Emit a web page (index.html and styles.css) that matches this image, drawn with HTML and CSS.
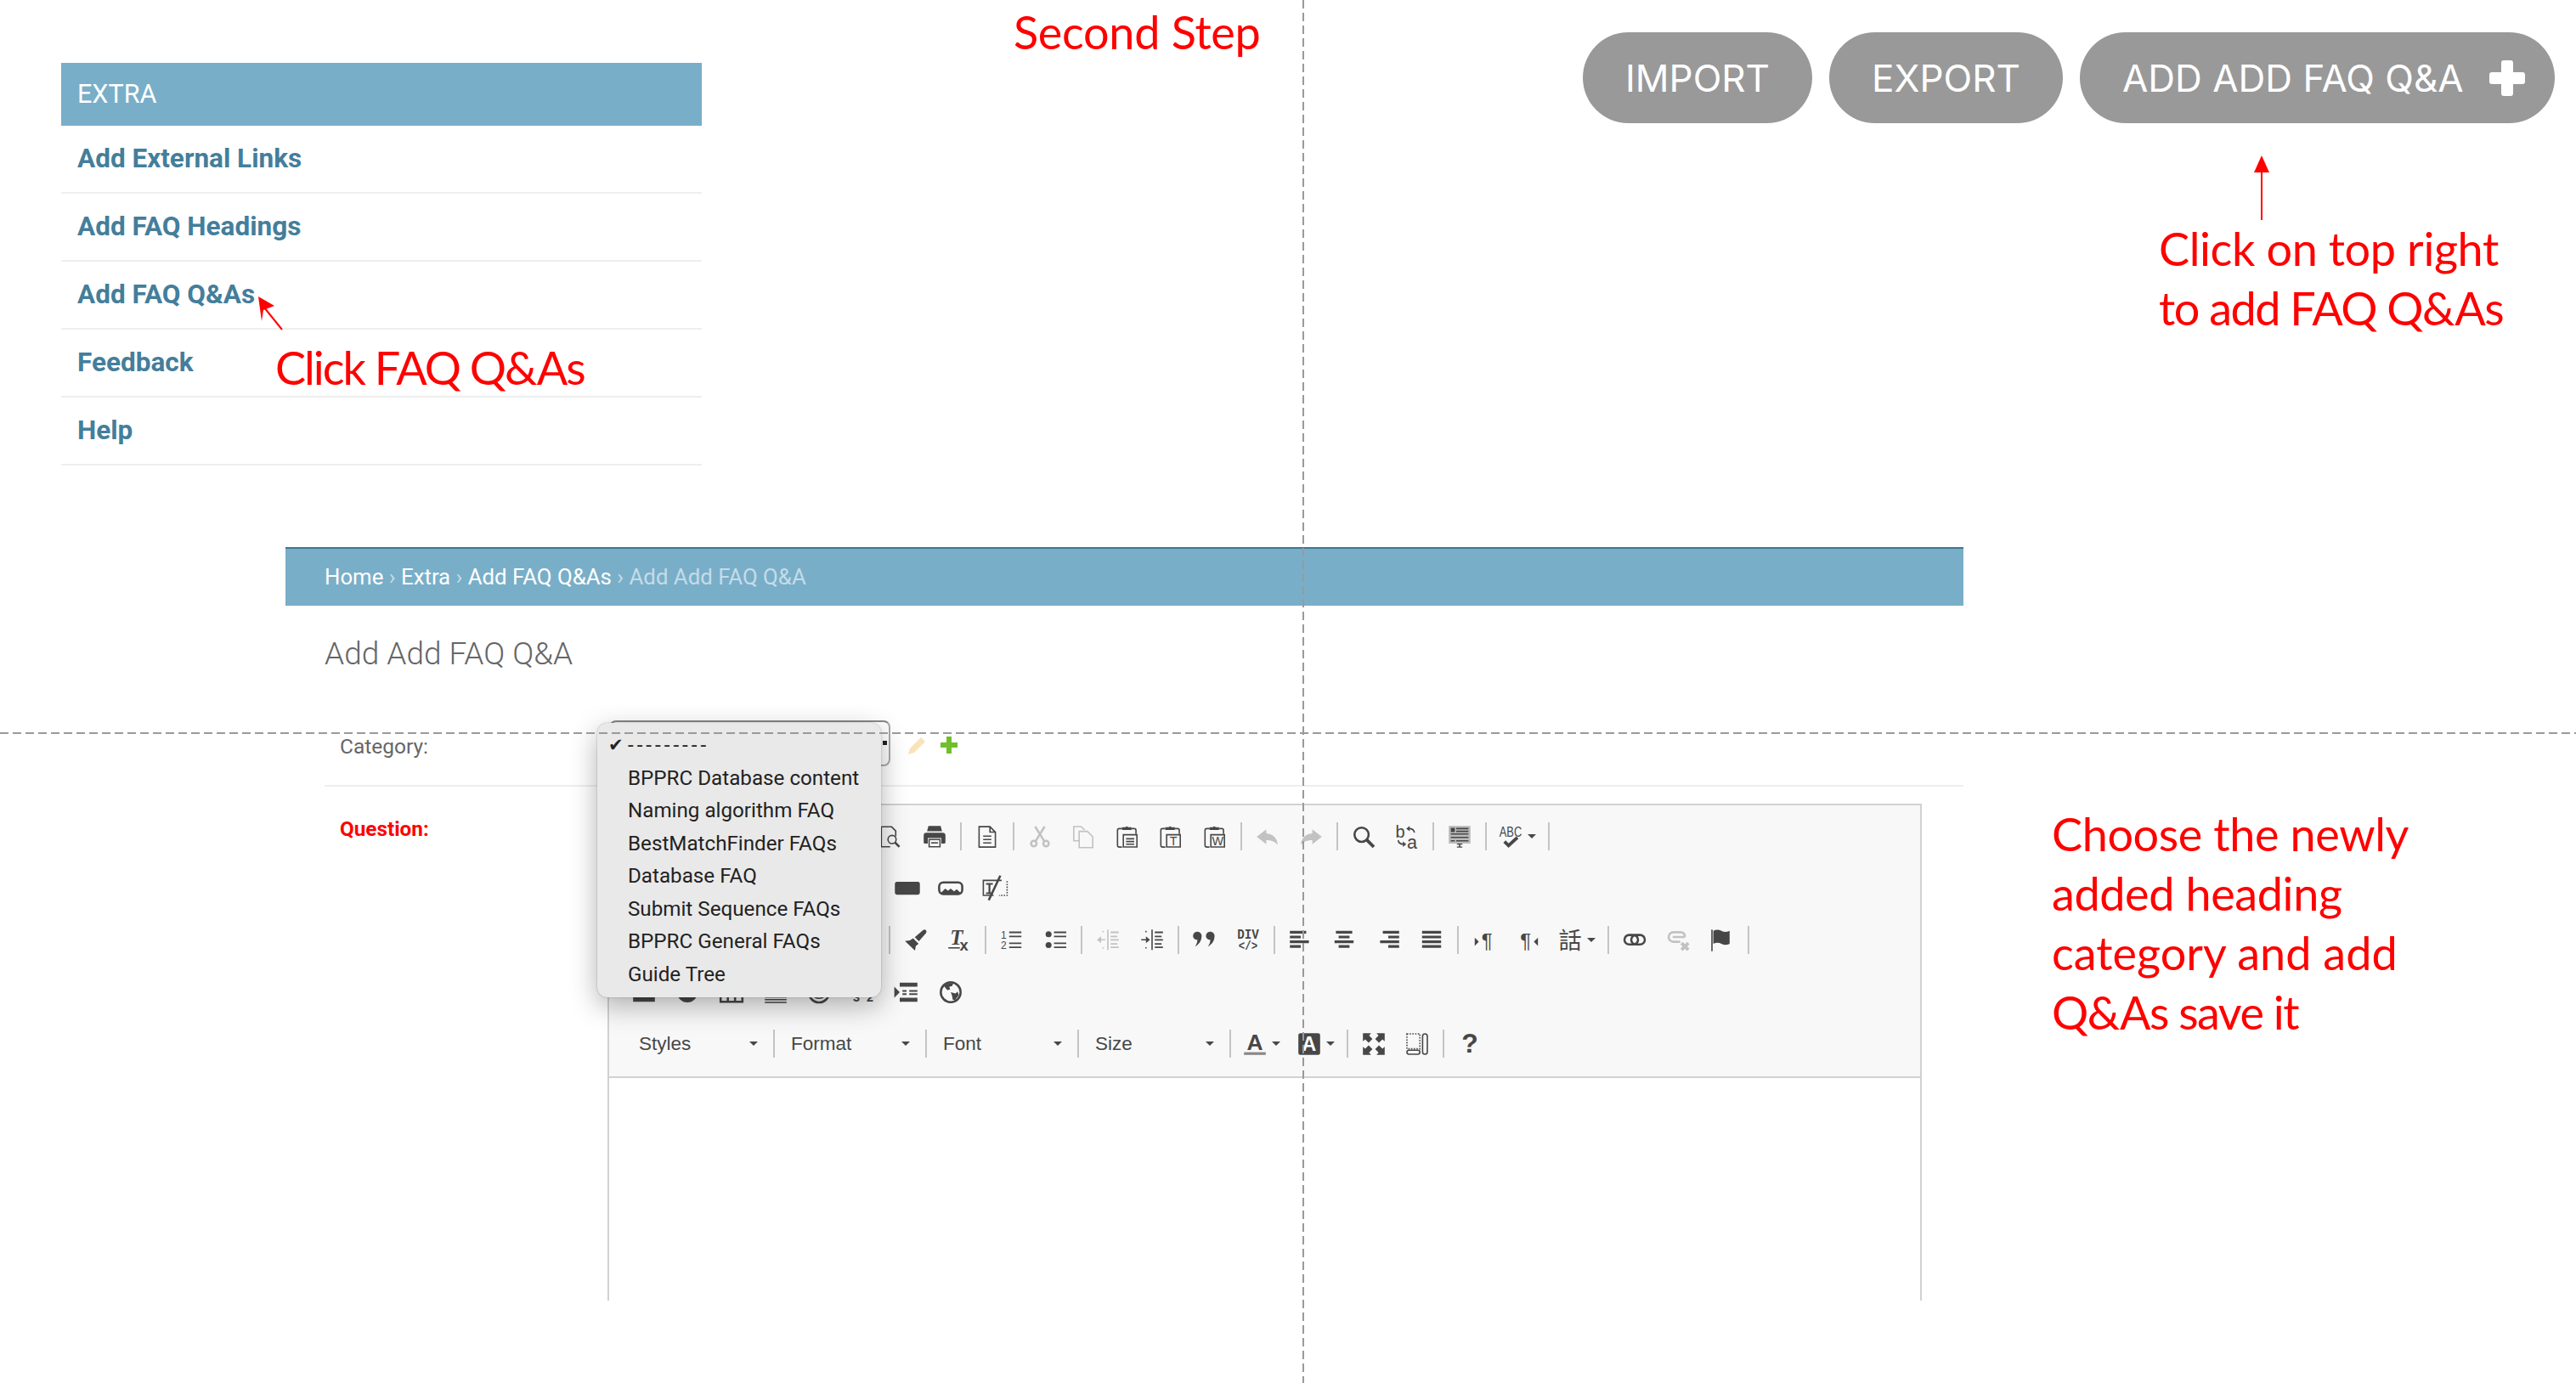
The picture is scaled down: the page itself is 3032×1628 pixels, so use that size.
FILE: index.html
```html
<!DOCTYPE html>
<html lang="en">
<head>
    <meta charset="UTF-8">
    <meta name="viewport" content="width=device-width, initial-scale=1.0">
    <title>Add FAQ Q&amp;As - Second Step</title>
    <link rel="stylesheet" href="styles.css">
</head>
<body>
    <svg class="sprite" aria-hidden="true">
        <defs>
            <symbol id="i-preview" viewBox="-2 -2 20 20"><path class="ln" d="M.7.7h7.6l3 3v4M.7.7v14.6h6.500"/><circle class="ln" cx="8.600" cy="10" r="3"/><path class="ln w2" d="M10.800 12.200l3.200 3.200"/></symbol>
            <symbol id="i-print" viewBox="-2 -2 20 20"><path d="M3.500 0h9l1 4h-11z"/><path d="M2 5h12q2 0 2 2v5q0 1-1 1h-2V9H3v4H1q-1 0-1-1V7q0-2 2-2z"/><path class="ln" d="M4 10h8v5.300H4z"/><path d="M5.500 12h5v1h-5z"/></symbol>
            <symbol id="i-doc" viewBox="-2 -2 20 20"><path class="ln" d="M2 .6h8l4 4v11H2zM10 .6v4h4"/><path d="M5 7h6v1H5zM5 9.500h6v1H5zM5 12h6v1H5z"/></symbol>
            <symbol id="i-cut" viewBox="-2 -2 20 20"><circle class="ln w2" cx="3.500" cy="13" r="2"/><circle class="ln w2" cx="12.500" cy="13" r="2"/><path class="ln w2" d="M4.800 11.200L11.500.5M11.200 11.200L4.500.5"/></symbol>
            <symbol id="i-copy" viewBox="-2 -2 20 20"><path class="ln" d="M5 11H1V.5h5.500l2.500 2.500"/><path class="ln" d="M5 4h6l4 4v8H5z"/></symbol>
            <symbol id="i-paste" viewBox="-2 -2 20 20"><path class="ln" d="M4 2H2q-1.300 0-1.300 1.300v11q0 1.300 1.300 1.300h2M11 2h2q1.300 0 1.300 1.300V6"/><path d="M4 1h2.500q1-1.200 2 0H11v2H4z"/><path class="ln" d="M5 6.500h10v9H5z"/><path d="M7 9h6v1H7zM7 11h6v1H7zM7 13h6v1H7z"/></symbol>
            <symbol id="i-pastetext" viewBox="-2 -2 20 20"><path class="ln" d="M4 2H2q-1.300 0-1.300 1.300v11q0 1.300 1.300 1.300h2M11 2h2q1.300 0 1.300 1.300V6"/><path d="M4 1h2.500q1-1.200 2 0H11v2H4z"/><path class="ln" d="M5 6.500h10v9H5z"/><text class="glyph" x="10" y="14" font-size="9" text-anchor="middle">T</text></symbol>
            <symbol id="i-pasteword" viewBox="-2 -2 20 20"><path class="ln" d="M4 2H2q-1.300 0-1.300 1.300v11q0 1.300 1.300 1.300h2M11 2h2q1.300 0 1.300 1.300V6"/><path d="M4 1h2.500q1-1.200 2 0H11v2H4z"/><path class="ln" d="M5 6.500h10v9H5z"/><text class="glyph" x="10" y="14" font-size="9" text-anchor="middle">W</text></symbol>
            <symbol id="i-undo" viewBox="-2 -2 20 20"><path d="M7 2.500L0 8l7 5.500V10.500c3.500 0 6.500 1 8.500 3.500C15 9 12 6 7 5.500z"/></symbol>
            <symbol id="i-redo" viewBox="-2 -2 20 20"><path d="M9 2.500L16 8l-7 5.500V10.500c-3.500 0-6.500 1-8.500 3.500C1 9 4 6 9 5.500z"/></symbol>
            <symbol id="i-find" viewBox="-2 -2 20 20"><circle class="ln w2" cx="6.500" cy="6.500" r="5.200"/><path class="ln w3" d="M10.300 10.300l5.200 5.200"/></symbol>
            <symbol id="i-replace" viewBox="-2 -2 20 20"><text class="glyph" x="-.5" y="8.500" font-size="12.500">b</text><text class="glyph" x="8" y="16.500" font-size="13.500">a</text><path class="ln" d="M13.500 5Q13 2 9.500 2M1.500 10.500q.5 3 4 3"/><path d="M10 0v4L7.500 2zM5 11.500v4l2.500-2z"/></symbol>
            <symbol id="i-blocks" viewBox="-2 -2 20 20"><path fill="#bbb" d="M0 0h16v13H0z"/><path d="M1.500 1.500h3v3h-3zM5.500 1.500h9v1h-9zM5.500 3.500h9v1h-9zM1.500 5.500h13v1h-13zM1.500 8h13v1h-13zM1.500 10.500h3v1h-3zM5.500 10.500h9v1h-9z"/><path d="M6 13h4v.8H8.500v1.400H10v.8H6v-.8h1.500v-1.400H6z"/></symbol>
            <symbol id="i-spell" viewBox="-2 -2 20 20"><text class="glyph" x="8" y="8" font-size="10.500" text-anchor="middle" textLength="16.500" lengthAdjust="spacingAndGlyphs">ABC</text><path class="ln w3" d="M3.500 11.500l3 3 6.500-6"/></symbol>
            <symbol id="i-button" viewBox="-2 -2 20 20"><rect x="-1.200" y="3" width="18.400" height="9.500" rx="1.500"/></symbol>
            <symbol id="i-imgbutton" viewBox="-2 -2 20 20"><rect class="ln w2" x="-.500" y="3.500" width="17" height="8.500" rx="3"/><path d="M1 11l3-3 2 1.500L8 8l2.500 2L12.500 8.500 15 11v.500H1z"/></symbol>
            <symbol id="i-field" viewBox="-2 -2 20 20"><path class="ln" d="M7 13H-.5V2H13"/><path d="M1.500 4h5v1.200H4.700v5.600h1.800V12h-5v-1.200h1.800V5.200H1.500z"/><path class="ln w2" d="M12-1.500L3.500 16.500"/><path class="ln dots" d="M17 2.500V13H11"/></symbol>
            <symbol id="i-brush" viewBox="-2 -2 20 20"><path d="M6 6.500l4 4-2 1.500-.7 3.500L0 8.500l3.500-.5z"/><path d="M7.200 5.700l6-5.200q1.300-1 2.200 0t0 2.200l-5.200 6z"/></symbol>
            <symbol id="i-clear" viewBox="-2 -2 20 20"><text x="6" y="11" font-size="15.500" font-weight="700" font-style="italic" font-family="Liberation Serif" text-anchor="middle">T</text><path d="M0 13h8.500v1H0z"/><text class="glyph bold" x="11.500" y="15.500" font-size="11.500" text-anchor="middle">x</text></symbol>
            <symbol id="i-ol" viewBox="-2 -2 20 20"><text class="glyph" x="2" y="6.500" font-size="7.500" text-anchor="middle">1</text><text class="glyph" x="2" y="14.500" font-size="7.500" text-anchor="middle">2</text><path d="M6 1.500h9v1.200H6zM6 4.500h9v1.200H6zM6 9.500h9v1.200H6zM6 12.500h9v1.200H6z"/></symbol>
            <symbol id="i-ul" viewBox="-2 -2 20 20"><circle cx="2.500" cy="3.500" r="2.200"/><circle cx="2.500" cy="11.500" r="2.200"/><path d="M6.500 1.500h9v1.200h-9zM6.500 4.500h9v1.200h-9zM6.500 9.500h9v1.200h-9zM6.500 12.500h9v1.200h-9z"/></symbol>
            <symbol id="i-outdent" viewBox="-2 -2 20 20"><path d="M7.500 0h1v15h-1zM10 1.500h6v1.200h-6zM10 4.500h5v1.200h-5zM10 7h6v1.200h-6zM10 10h5v1.200h-5zM10 12.500h6v1.200h-6zM0 7.500L3 5v2h3v1H3v2z"/><path class="ln dots" d="M4 1.500h2M4 13.500h2"/></symbol>
            <symbol id="i-indent" viewBox="-2 -2 20 20"><path d="M7.500 0h1v15h-1zM10 1.500h6v1.200h-6zM10 4.500h5v1.200h-5zM10 7h6v1.200h-6zM10 10h5v1.200h-5zM10 12.500h6v1.200h-6zM6.500 7.500L3.500 5v2H0v1h3.500v2z"/><path class="ln dots" d="M3 1.500h2M3 13.500h2"/></symbol>
            <symbol id="i-quote" viewBox="-2 -2 20 20"><path d="M0 4.500a3.200 3.200 0 1 1 6.300 1C6 8.500 4.500 11 1.500 12.500c1.300-2 1.800-3.500 1.700-5C1.300 7.500 0 6.300 0 4.500zM9.500 4.500a3.200 3.200 0 1 1 6.300 1c-.3 3-1.800 5.500-4.800 7 1.300-2 1.800-3.500 1.700-5-1.900 0-3.200-1.200-3.200-3z"/></symbol>
            <symbol id="i-div" viewBox="-2 -2 20 20"><text class="glyph mono" x="8" y="7" font-size="10" text-anchor="middle" textLength="16" lengthAdjust="spacingAndGlyphs">DIV</text><text class="glyph mono" x="8" y="15" font-size="9.500" text-anchor="middle" textLength="14" lengthAdjust="spacingAndGlyphs">&lt;/&gt;</text></symbol>
            <symbol id="i-left" viewBox="-2 -2 20 20"><path d="M0 1h12v2H0zM0 4.500h8v2H0zM0 8h14v2H0zM0 11.500h8v2H0z"/></symbol>
            <symbol id="i-center" viewBox="-2 -2 20 20"><path d="M2 1h12v2H2zM4 4.500h8v2H4zM1 8h14v2H1zM4 11.500h8v2H4z"/></symbol>
            <symbol id="i-right" viewBox="-2 -2 20 20"><path d="M4 1h12v2H4zM8 4.500h8v2H8zM2 8h14v2H2zM8 11.500h8v2H8z"/></symbol>
            <symbol id="i-justify" viewBox="-2 -2 20 20"><path d="M1 1h14v2H1zM1 4.500h14v2H1zM1 8h14v2H1zM1 11.500h14v2H1z"/></symbol>
            <symbol id="i-ltr" viewBox="-2 -2 20 20"><text class="glyph" x="10" y="13.500" font-size="15" text-anchor="middle">¶</text><path d="M1 6l3 3-3 3z"/></symbol>
            <symbol id="i-rtl" viewBox="-2 -2 20 20"><text class="glyph" x="6" y="13.500" font-size="15" text-anchor="middle">¶</text><path d="M15 6l-3 3 3 3z"/></symbol>
            <symbol id="i-lang" viewBox="-2 -2 20 20"><text class="glyph cjk" x="8" y="14.500" font-size="17" text-anchor="middle">話</text></symbol>
            <symbol id="i-link" viewBox="-2 -2 20 20"><rect class="ln w2" x=".5" y="4" width="10" height="7" rx="3.500"/><rect class="ln w2" x="5.500" y="4" width="10" height="7" rx="3.500"/></symbol>
            <symbol id="i-unlink" viewBox="-2 -2 20 20"><path class="ln w2" d="M9 9H4a3.500 3.500 0 0 1 0-7h5q3.500 0 3.500 3.500M3.500 5.500h9"/><path class="ln w3" d="M10 10l5 5M15 10l-5 5"/></symbol>
            <symbol id="i-flag" viewBox="-2 -2 20 20"><path d="M0 0h1v16H0z"/><path d="M1.500 1q3-1.500 6 0t6 0v9.500q-3 1.500-6 0t-6 0z"/></symbol>
            <symbol id="i-media" viewBox="-2 -2 20 20"><path d="M0 8h16v7H0z"/></symbol>
            <symbol id="i-disc" viewBox="-2 -2 20 20"><circle cx="8" cy="8" r="7.500"/></symbol>
            <symbol id="i-table" viewBox="-2 -2 20 20"><path class="ln w2" d="M0 6h16v9H0zM5.300 6v9M10.600 6v9"/></symbol>
            <symbol id="i-rule" viewBox="-2 -2 20 20"><path d="M0 11h16v1H0zM0 13h16v1H0zM0 15h16v1H0z"/></symbol>
            <symbol id="i-smiley" viewBox="-2 -2 20 20"><circle class="ln w2" cx="8" cy="8" r="7.500"/><path class="ln" d="M4 11q4 3 8 0"/></symbol>
            <symbol id="i-chars" viewBox="-2 -2 20 20"><text class="glyph bold" x="3" y="15" font-size="9" text-anchor="middle">3</text><text class="glyph bold" x="13" y="15" font-size="9" text-anchor="middle">2</text></symbol>
            <symbol id="i-showblock" viewBox="-2 -2 20 20"><path d="M-1 4l4 4-4 4zM3 1h13v3H3zM5 6.500h3v1.200H5zM10 6.500h6v1.200h-6zM5 8.800h3V10H5zM10 8.800h6V10h-6zM3 12h13v3H3z"/></symbol>
            <symbol id="i-globe" viewBox="-2 -2 20 20"><circle class="ln w2" cx="8" cy="8" r="7.300"/><path d="M3 3.500Q6 .5 10 1.500L9 3.500 7 4l.5 2-2 .5zM8 8l3.500 1L13 7.500l1 2.500-3 4-1.500-.5-.5-3z"/></symbol>
            <symbol id="i-color" viewBox="-2 -2 20 20"><text class="glyph bold" x="8" y="12.500" font-size="16.500" text-anchor="middle">A</text><path fill="#888" d="M0 14h16v2H0z"/></symbol>
            <symbol id="i-bgcolor" viewBox="-2 -2 20 20"><rect x="0" y="0" width="16" height="16" rx="1.500"/><text x="8" y="13" font-size="14.500" font-weight="700" fill="#fff" font-family="Liberation Sans" text-anchor="middle">A</text></symbol>
            <symbol id="i-max" viewBox="-2 -2 20 20"><path d="M0 0h6L4.500 1.700 7 4.200 4.200 7 1.700 4.500 0 6zM16 0v6l-1.700-1.500L11.800 7 9 4.200l2.500-2.500L10 0zM0 16v-6l1.700 1.500L4.200 9 7 11.800l-2.500 2.500L6 16zM16 16h-6l1.500-1.700L9 11.800 11.800 9l2.500 2.500L16 10z"/></symbol>
            <symbol id="i-resize" viewBox="-2 -2 20 20"><path class="ln dots" d="M.5.500h9.500v11H.5z"/><rect class="ln" x="12" y=".5" width="3.500" height="15" rx="1.750"/><rect class="ln" x=".5" y="12.500" width="9.500" height="3" rx="1.500"/></symbol>
            <symbol id="i-pencil" viewBox="0 0 22 22"><path d="M16 1l5 5L8 19l-7 2 2-7z"/></symbol>
        </defs>
    </svg>

    <div class="page">
        <div class="top">
            <div class="module">
                <h2 class="module-head">EXTRA</h2>
                <a class="module-row">Add External Links</a>
                <a class="module-row">Add FAQ Headings</a>
                <a class="module-row">Add FAQ Q&amp;As</a>
                <a class="module-row">Feedback</a>
                <a class="module-row">Help</a>
            </div>
            <div class="tools">
                <a class="tool-btn">IMPORT</a>
                <a class="tool-btn">EXPORT</a>
                <a class="tool-btn tool-add">ADD ADD FAQ Q&amp;A <span class="tool-plus"></span></a>
            </div>
        </div>

        <div class="main">
            <div class="breadcrumbs">
                <a>Home</a> <span class="crumb-sep">›</span> <a>Extra</a> <span class="crumb-sep">›</span> <a>Add FAQ Q&amp;As</a> <span class="crumb-sep">›</span> <span class="crumb-last">Add Add FAQ Q&amp;A</span>
            </div>
            <div class="content">
                <h1 class="title">Add Add FAQ Q&amp;A</h1>

                <div class="form-row category-row">
                    <label class="form-label">Category:</label>
                    <div class="select-wrap">
                        <div class="select-box"></div>
                        <div class="select-menu">
                            <div class="menu-item"><span class="menu-check">✔</span><span class="menu-blank">---------</span></div>
                            <div class="menu-item">BPPRC Database content</div>
                            <div class="menu-item">Naming algorithm FAQ</div>
                            <div class="menu-item">BestMatchFinder FAQs</div>
                            <div class="menu-item">Database FAQ</div>
                            <div class="menu-item">Submit Sequence FAQs</div>
                            <div class="menu-item">BPPRC General FAQs</div>
                            <div class="menu-item">Guide Tree</div>
                        </div>
                    </div>
                    <svg class="field-pencil"><use href="#i-pencil"/></svg>
                    <span class="field-plus"></span>
                </div>

                <div class="form-row question-row">
                    <label class="form-label required">Question:</label>
                    <div class="editor">
                        <div class="ck-toolbar">
                            <div class="ck-row row-a">
                                <span class="ck-btn"><svg><use href="#i-preview"/></svg></span>
                                <span class="ck-btn"><svg><use href="#i-print"/></svg></span>
                                <i class="ck-sep"></i>
                                <span class="ck-btn"><svg><use href="#i-doc"/></svg></span>
                                <i class="ck-sep"></i>
                                <span class="ck-btn off"><svg><use href="#i-cut"/></svg></span>
                                <span class="ck-btn off"><svg><use href="#i-copy"/></svg></span>
                                <span class="ck-btn"><svg><use href="#i-paste"/></svg></span>
                                <span class="ck-btn"><svg><use href="#i-pastetext"/></svg></span>
                                <span class="ck-btn"><svg><use href="#i-pasteword"/></svg></span>
                                <i class="ck-sep"></i>
                                <span class="ck-btn off"><svg><use href="#i-undo"/></svg></span>
                                <span class="ck-btn off"><svg><use href="#i-redo"/></svg></span>
                                <i class="ck-sep"></i>
                                <span class="ck-btn"><svg><use href="#i-find"/></svg></span>
                                <span class="ck-btn"><svg><use href="#i-replace"/></svg></span>
                                <i class="ck-sep"></i>
                                <span class="ck-btn"><svg><use href="#i-blocks"/></svg></span>
                                <i class="ck-sep"></i>
                                <span class="ck-drop"><svg><use href="#i-spell"/></svg><i class="caret"></i></span>
                                <i class="ck-sep"></i>
                            </div>
                            <div class="ck-row row-b">
                                <span class="ck-btn"><svg><use href="#i-button"/></svg></span>
                                <span class="ck-btn"><svg><use href="#i-imgbutton"/></svg></span>
                                <span class="ck-btn"><svg><use href="#i-field"/></svg></span>
                            </div>
                            <div class="ck-row row-c">
                                <i class="ck-sep"></i>
                                <span class="ck-btn"><svg><use href="#i-brush"/></svg></span>
                                <span class="ck-btn"><svg><use href="#i-clear"/></svg></span>
                                <i class="ck-sep"></i>
                                <span class="ck-btn"><svg><use href="#i-ol"/></svg></span>
                                <span class="ck-btn"><svg><use href="#i-ul"/></svg></span>
                                <i class="ck-sep"></i>
                                <span class="ck-btn off"><svg><use href="#i-outdent"/></svg></span>
                                <span class="ck-btn"><svg><use href="#i-indent"/></svg></span>
                                <i class="ck-sep"></i>
                                <span class="ck-btn"><svg><use href="#i-quote"/></svg></span>
                                <span class="ck-btn"><svg><use href="#i-div"/></svg></span>
                                <i class="ck-sep"></i>
                                <span class="ck-btn"><svg><use href="#i-left"/></svg></span>
                                <span class="ck-btn"><svg><use href="#i-center"/></svg></span>
                                <span class="ck-btn"><svg><use href="#i-right"/></svg></span>
                                <span class="ck-btn"><svg><use href="#i-justify"/></svg></span>
                                <i class="ck-sep"></i>
                                <span class="ck-btn"><svg><use href="#i-ltr"/></svg></span>
                                <span class="ck-btn"><svg><use href="#i-rtl"/></svg></span>
                                <span class="ck-drop"><svg><use href="#i-lang"/></svg><i class="caret"></i></span>
                                <i class="ck-sep"></i>
                                <span class="ck-btn"><svg><use href="#i-link"/></svg></span>
                                <span class="ck-btn off"><svg><use href="#i-unlink"/></svg></span>
                                <span class="ck-btn"><svg><use href="#i-flag"/></svg></span>
                                <i class="ck-sep"></i>
                            </div>
                            <div class="ck-row row-d">
                                <span class="ck-btn"><svg><use href="#i-media"/></svg></span>
                                <span class="ck-btn"><svg><use href="#i-disc"/></svg></span>
                                <span class="ck-btn"><svg><use href="#i-table"/></svg></span>
                                <span class="ck-btn"><svg><use href="#i-rule"/></svg></span>
                                <span class="ck-btn"><svg><use href="#i-smiley"/></svg></span>
                                <span class="ck-btn"><svg><use href="#i-chars"/></svg></span>
                                <span class="ck-btn"><svg><use href="#i-showblock"/></svg></span>
                                <span class="ck-btn"><svg><use href="#i-globe"/></svg></span>
                            </div>
                            <div class="ck-row row-e">
                                <span class="ck-combo">Styles<i class="caret"></i></span>
                                <i class="ck-sep"></i>
                                <span class="ck-combo">Format<i class="caret"></i></span>
                                <i class="ck-sep"></i>
                                <span class="ck-combo">Font<i class="caret"></i></span>
                                <i class="ck-sep"></i>
                                <span class="ck-combo">Size<i class="caret"></i></span>
                                <i class="ck-sep"></i>
                                <span class="ck-drop"><svg><use href="#i-color"/></svg><i class="caret"></i></span>
                                <span class="ck-drop"><svg><use href="#i-bgcolor"/></svg><i class="caret"></i></span>
                                <i class="ck-sep"></i>
                                <span class="ck-btn"><svg><use href="#i-max"/></svg></span>
                                <span class="ck-btn"><svg><use href="#i-resize"/></svg></span>
                                <i class="ck-sep"></i>
                                <span class="ck-btn ck-help">?</span>
                            </div>
                        </div>
                    </div>
                </div>
            </div>
        </div>

        <!-- red notes and guides drawn over the screenshots -->
        <div class="note note-step">Second Step</div>
        <div class="note note-click">Click FAQ Q&amp;As</div>
        <div class="note note-top">Click on top right<br><span class="note-tight">to add FAQ Q&amp;As</span></div>
        <div class="note note-choose">Choose the newly<br>added heading<br><span class="note-loose">category and add</span><br><span class="note-tight">Q&amp;As save it</span></div>
        <svg class="arrows" viewBox="0 0 3032 1628">
            <path class="arrow-line" d="M2662 200V259"/>
            <path class="arrow-head" d="M2662 183l9 20h-18z"/>
            <path class="arrow-line" d="M311 362l21 26"/>
            <path class="arrow-head" d="M304 349l19 11-13 5-2 13z"/>
        </svg>
        <div class="guide guide-h"></div>
        <div class="guide guide-v"></div>
    </div>
</body>
</html>
```

FILE: styles.css
```css
body {
    margin: 0;
    background: #fff;
    font-family: Roboto, sans-serif;
}

.sprite {
    position: absolute;
    width: 0;
    height: 0;
}

.page {
    position: relative;
    width: 3032px;
    height: 1628px;
    overflow: hidden;
}

.top {
    display: flex;
    justify-content: space-between;
    align-items: flex-start;
    height: 644px;
    padding: 0 25px 0 72px;
}

/* sidebar module */
.module {
    width: 754px;
    margin-top: 74px;
}

.module-head {
    margin: 0;
    height: 74px;
    padding-left: 19px;
    background: #79aec8;
    color: #fff;
    font-size: 30.500px;
    font-weight: 400;
    line-height: 74px;
}

.module-row {
    display: block;
    height: 78px;
    padding-left: 19px;
    border-bottom: 2px solid #eee;
    color: #447e9b;
    font-size: 31.500px;
    font-weight: 700;
    line-height: 77px;
}

/* top right buttons */
.tools {
    display: flex;
    gap: 20px;
    margin-top: 38px;
}

.tool-btn {
    display: flex;
    align-items: center;
    height: 107px;
    padding: 0 50px;
    border-radius: 54px;
    background: #999;
    color: #fff;
    font-family: Inter, sans-serif;
    font-size: 44px;
    white-space: pre;
}

.tool-add {
    padding-right: 35px;
}

.tool-plus {
    position: relative;
    width: 42px;
    height: 42px;
    margin-left: 18px;
}

.tool-plus::before,
.tool-plus::after {
    content: "";
    position: absolute;
    background: #fff;
    border-radius: 3px;
}

.tool-plus::before {
    left: 0;
    right: 0;
    top: 14px;
    bottom: 14px;
}

.tool-plus::after {
    top: 0;
    bottom: 0;
    left: 14px;
    right: 14px;
}

/* change form */
.main {
    width: 1975px;
    margin-left: 336px;
}

.breadcrumbs {
    box-sizing: border-box;
    height: 69px;
    padding-left: 46px;
    border-top: 2px solid #417690;
    background: #79aec8;
    color: #fff;
    font-size: 25.800px;
    line-height: 67px;
}

.crumb-sep {
    color: #c4dce8;
}

.crumb-last {
    color: #c4dce8;
}

.content {
    padding-left: 46px;
}

.title {
    margin: 33px 0 54px;
    color: #666;
    font-size: 37px;
    font-weight: 300;
    line-height: 48px;
}

.form-row {
    display: flex;
    border-bottom: 2px solid #eee;
}

.category-row {
    height: 76px;
}

.question-row {
    padding-top: 20px;
    border-bottom: 0;
}

.form-label {
    box-sizing: border-box;
    width: 333px;
    padding-left: 18px;
    color: #666;
    font-size: 24.500px;
    line-height: 30px;
}

.category-row .form-label {
    padding-top: 16px;
}

.question-row .form-label {
    padding-top: 15px;
}

.form-label.required {
    color: #f00;
    font-size: 24.300px;
    font-weight: 700;
}

.select-wrap {
    position: relative;
    width: 331px;
    height: 54px;
    margin-left: 2px;
}

.select-box {
    box-sizing: border-box;
    height: 54px;
    border: 2px solid #aaa;
    border-top-color: #888;
    border-radius: 8px;
}

.select-box::after {
    content: "";
    display: block;
    width: 5px;
    height: 5px;
    margin: 22px 0 0 320px;
    background: #222;
}

.select-menu {
    position: absolute;
    z-index: 2;
    left: -14px;
    top: 3px;
    box-sizing: border-box;
    width: 334px;
    height: 323px;
    padding-top: 7px;
    border-radius: 12px;
    background: #e9e9e9;
    box-shadow: 0 10px 32px rgba(0, 0, 0, 0.3), 0 0 2px rgba(0, 0, 0, 0.3);
    color: #222;
    font-size: 24.200px;
}

.menu-item {
    position: relative;
    height: 38.500px;
    padding-left: 36px;
    line-height: 38.500px;
    white-space: nowrap;
}

.menu-blank {
    letter-spacing: 4px;
}

.menu-check {
    position: absolute;
    left: 13px;
    font-family: "DejaVu Sans", sans-serif;
    font-size: 21px;
}

.field-pencil {
    width: 22px;
    height: 22px;
    margin: 19px 0 0 20px;
    fill: #f9e3b8;
}

.field-plus {
    position: relative;
    width: 20px;
    height: 20px;
    margin: 19px 0 0 17px;
    background:
        linear-gradient(#70bf2b, #70bf2b) center / 100% 6px no-repeat,
        linear-gradient(#70bf2b, #70bf2b) center / 6px 100% no-repeat;
}

/* ckeditor */
.editor {
    box-sizing: border-box;
    width: 1547px;
    height: 585px;
    border: 2px solid #d1d1d1;
    border-bottom: 0;
}

.ck-toolbar {
    box-sizing: border-box;
    height: 321px;
    padding-top: 6px;
    border-bottom: 2px solid #d1d1d1;
    background: #f8f8f8;
    color: #474747;
}

.ck-row {
    display: flex;
    align-items: center;
    height: 61px;
}

.row-a {
    padding-left: 306px;
}

.row-b,
.row-c {
    padding-left: 325px;
}

.row-d {
    padding-left: 15px;
}

.row-e {
    padding-left: 20px;
}

.ck-btn {
    display: flex;
    justify-content: center;
    align-items: center;
    width: 51.600px;
    height: 40px;
    flex: none;
}

.ck-btn svg,
.ck-drop svg {
    width: 32px;
    height: 32px;
    flex: none;
    fill: currentColor;
}

.ck-btn.off {
    opacity: 0.3;
}

.ck-drop {
    display: flex;
    align-items: center;
    width: 64px;
    height: 40px;
    padding-left: 8px;
    box-sizing: border-box;
    flex: none;
}

.ck-drop .caret {
    margin-left: 4px;
}

.ck-sep {
    width: 2px;
    height: 33px;
    margin: 0 4px;
    background: #c4c4c4;
    flex: none;
}

.caret {
    width: 0;
    height: 0;
    border: 5px solid transparent;
    border-top-color: #474747;
    border-bottom: 0;
    flex: none;
}

.ck-combo {
    display: flex;
    justify-content: space-between;
    align-items: center;
    box-sizing: border-box;
    width: 169px;
    padding: 0 14px 0 15px;
    color: #474747;
    font-family: "Liberation Sans", sans-serif;
    font-size: 22.500px;
    flex: none;
}

.ck-help {
    font-family: "Liberation Sans", sans-serif;
    font-size: 32px;
    font-weight: 700;
}

.ln {
    fill: none;
    stroke: currentColor;
    stroke-width: 1;
}

.w2 {
    stroke-width: 1.600;
}

.w3 {
    stroke-width: 2.400;
}

.dots {
    stroke-dasharray: 1 1;
}

.glyph {
    font-family: "Liberation Sans", sans-serif;
}

.glyph.bold {
    font-weight: 700;
}

.glyph.mono {
    font-family: "Liberation Mono", monospace;
    font-weight: 700;
}

.glyph.cjk {
    font-family: "Noto Sans CJK TC", sans-serif;
}

/* annotations */
.note {
    position: absolute;
    z-index: 3;
    color: #f00;
    font-family: Lato, sans-serif;
    font-size: 54px;
    line-height: 70px;
    white-space: nowrap;
}

.note-step {
    left: 1193px;
    top: 3px;
    letter-spacing: -0.300px;
}

.note-click {
    left: 324px;
    top: 398px;
    letter-spacing: -2px;
}

.note-top {
    left: 2541px;
    top: 258px;
    letter-spacing: -0.400px;
}

.note-choose {
    left: 2415px;
    top: 947px;
    letter-spacing: -0.400px;
}

.note-tight {
    letter-spacing: -1.500px;
}

.note-loose {
    letter-spacing: 0;
}

.arrows {
    position: absolute;
    z-index: 3;
    left: 0;
    top: 0;
    width: 3032px;
    height: 1628px;
    pointer-events: none;
}

.arrow-line {
    fill: none;
    stroke: #f00;
    stroke-width: 2;
}

.arrow-head {
    fill: #f00;
}

.guide {
    position: absolute;
    z-index: 4;
}

.guide-h {
    left: 0;
    right: 0;
    top: 862px;
    height: 2px;
    background: repeating-linear-gradient(90deg, #9a9a9a 0 10px, transparent 10px 15px);
}

.guide-v {
    top: 0;
    bottom: 0;
    left: 1533px;
    width: 2px;
    background: repeating-linear-gradient(180deg, #9a9a9a 0 10px, transparent 10px 15px);
}
```
